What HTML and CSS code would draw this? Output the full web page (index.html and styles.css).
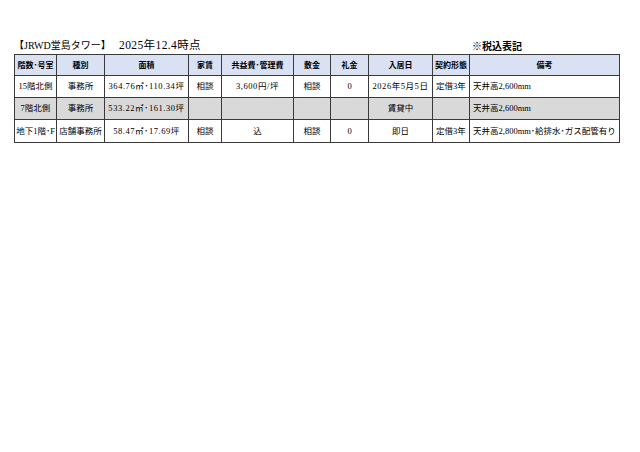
FILE: index.html
```html
<!DOCTYPE html>
<html lang="ja">
<head>
<meta charset="utf-8">
<title>JRWD堂島タワー</title>
<link rel="stylesheet" href="styles.css">
</head>
<body>
<div class="page">
  <div class="heading">
    <div class="title">【JRWD堂島タワー】</div>
    <div class="date">2025年12.4時点</div>
    <div class="note">※税込表記</div>
  </div>
  <table class="list">
    <colgroup>
      <col class="c1"><col class="c2"><col class="c3"><col class="c4"><col class="c5">
      <col class="c6"><col class="c7"><col class="c8"><col class="c9"><col class="c10">
    </colgroup>
    <thead>
      <tr class="head">
        <th>階数･号室</th><th>種別</th><th>面積</th><th>家賃</th><th>共益費･管理費</th>
        <th>敷金</th><th>礼金</th><th>入居日</th><th>契約形態</th><th>備考</th>
      </tr>
    </thead>
    <tbody>
      <tr class="r1">
        <td>15階北側</td><td>事務所</td><td class="num">364.76㎡･110.34坪</td><td>相談</td><td class="num">3,600円/坪</td>
        <td>相談</td><td>0</td><td class="num">2026年5月5日</td><td>定借3年</td><td class="memo">天井高2,600mm</td>
      </tr>
      <tr class="r2 gray">
        <td>7階北側</td><td>事務所</td><td class="num">533.22㎡･161.30坪</td><td></td><td></td>
        <td></td><td></td><td>賃貸中</td><td></td><td class="memo">天井高2,600mm</td>
      </tr>
      <tr class="r3">
        <td>地下1階･F</td><td>店舗事務所</td><td class="num">58.47㎡･17.69坪</td><td>相談</td><td>込</td>
        <td>相談</td><td>0</td><td>即日</td><td>定借3年</td><td class="memo">天井高2,800mm･給排水･ガス配管有り</td>
      </tr>
    </tbody>
  </table>
</div>
</body>
</html>
```

FILE: styles.css
```css
html, body {
  margin: 0;
  padding: 0;
  background: #ffffff;
}
body {
  width: 640px;
  height: 452px;
  overflow: hidden;
  color: #000000;
  font-family: "Liberation Serif", "Noto Sans CJK JP", serif;
}
.page {
  padding: 38px 21px 0 14px;
}
.heading {
  display: grid;
  grid-template-columns: 105px 353px auto;
  height: 16px;
  align-items: center;
  line-height: 1;
}
.title {
  font-size: 10px;
}
.date {
  font-size: 11.5px;
  letter-spacing: 0.4px;
}
.note {
  font-size: 10px;
  font-family: "Noto Sans CJK JP", sans-serif;
  font-weight: 700;
}
.list {
  width: 605px;
  table-layout: fixed;
  border-collapse: collapse;
  font-size: 8.5px;
  line-height: 1;
}
.c1 { width: 42px; }
.c2 { width: 48px; }
.c3 { width: 84px; }
.c4 { width: 33px; }
.c5 { width: 72px; }
.c6 { width: 37px; }
.c7 { width: 38px; }
.c8 { width: 64px; }
.c9 { width: 37px; }
.c10 { width: 150px; }
.list th, .list td {
  border: 1px solid #3a3a3a;
  padding: 0;
  text-align: center;
  vertical-align: middle;
  white-space: nowrap;
  overflow: hidden;
}
.list th {
  font-family: "Noto Sans CJK JP", sans-serif;
  font-weight: 700;
  font-size: 8px;
  background: #d9e1f2;
}
.head { height: 21px; }
.r1, .r2 { height: 22px; }
.r3 { height: 23px; }
.gray td {
  background: #d9d9d9;
}
.list td.num {
  letter-spacing: 0.55px;
}
.list td.memo {
  text-align: left;
  padding-left: 3px;
}
```
